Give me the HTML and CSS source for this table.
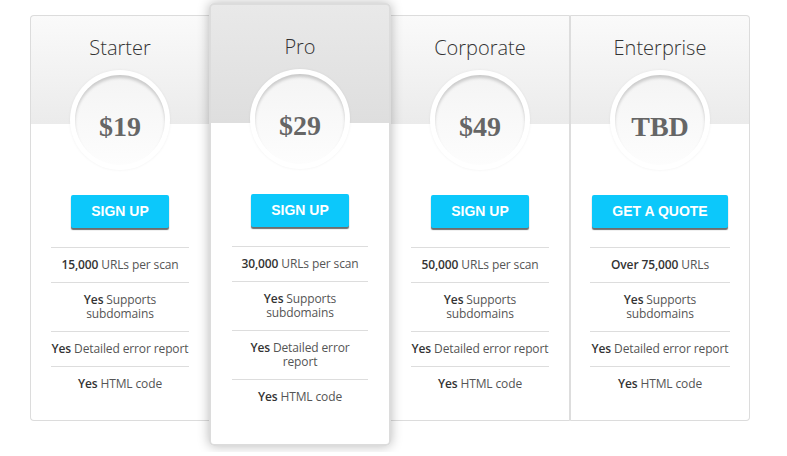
FILE: index.html
```html
<!DOCTYPE html>
<html>
<head>
<meta charset="utf-8">
<title>Pricing</title>
<link rel="stylesheet" href="styles.css">
</head>
<body>
<div class="plans">
  <div class="plan plan-first">
    <h2 class="plan-title">Starter</h2>
    <div class="price-ring"><div class="price">$19</div></div>
    <a class="btn">Sign up</a>
    <ul class="features">
      <li><b>15,000</b> URLs per scan</li>
      <li><b>Yes</b> Supports subdomains</li>
      <li><b>Yes</b> Detailed error report</li>
      <li><b>Yes</b> HTML code</li>
    </ul>
  </div>
  <div class="plan plan-featured">
    <h2 class="plan-title">Pro</h2>
    <div class="price-ring"><div class="price">$29</div></div>
    <a class="btn">Sign up</a>
    <ul class="features">
      <li><b>30,000</b> URLs per scan</li>
      <li><b>Yes</b> Supports subdomains</li>
      <li><b>Yes</b> Detailed error report</li>
      <li><b>Yes</b> HTML code</li>
    </ul>
  </div>
  <div class="plan">
    <h2 class="plan-title">Corporate</h2>
    <div class="price-ring"><div class="price">$49</div></div>
    <a class="btn">Sign up</a>
    <ul class="features">
      <li><b>50,000</b> URLs per scan</li>
      <li><b>Yes</b> Supports subdomains</li>
      <li><b>Yes</b> Detailed error report</li>
      <li><b>Yes</b> HTML code</li>
    </ul>
  </div>
  <div class="plan plan-last">
    <h2 class="plan-title">Enterprise</h2>
    <div class="price-ring"><div class="price">TBD</div></div>
    <a class="btn">Get a quote</a>
    <ul class="features">
      <li><b>Over 75,000</b> URLs</li>
      <li><b>Yes</b> Supports subdomains</li>
      <li><b>Yes</b> Detailed error report</li>
      <li><b>Yes</b> HTML code</li>
    </ul>
  </div>
</div>
</body>
</html>
```

FILE: styles.css
```css
* { box-sizing: border-box; }
html, body { margin: 0; background: #fff; }
body {
  padding: 3px 0 6px 30px;
  font-family: "Open Sans", "Liberation Sans", sans-serif;
}
.plans {
  display: flex;
  align-items: flex-start;
  width: 720px;
}
.plan {
  flex: 1 1 0;
  min-width: 0;
  height: 406px;
  margin-top: 12px;
  display: flex;
  flex-direction: column;
  align-items: center;
  border-top: 1px solid #dcdcdc;
  border-bottom: 1px solid #dcdcdc;
  background: linear-gradient(to bottom, #fafafa 0, #ebebeb 108px, #fff 108px, #fff 100%);
}
.plan-first {
  border-left: 1px solid #dcdcdc;
  border-radius: 4px 0 0 4px;
}
.plan-last {
  border-left: 2px solid #dddddd;
  border-right: 1px solid #dcdcdc;
  border-radius: 0 4px 4px 0;
}
.plan-featured {
  position: relative;
  z-index: 2;
  height: 443px;
  margin-top: 0;
  padding-top: 10px;
  border: 2px solid #dcdcdc;
  border-radius: 5px;
  background: linear-gradient(to bottom, #e9e9e9 0, #dedede 118px, #fff 118px, #fff 100%);
  box-shadow: 0 0 12px rgba(0, 0, 0, 0.28);
}
.plan-title {
  margin: 20px 0 10px;
  font-size: 20px;
  line-height: 24px;
  font-weight: 300;
  color: #333;
}
.price-ring {
  width: 100px;
  height: 100px;
  padding: 5px;
  border-radius: 50%;
  background: #fff;
  box-shadow: 0 0 3px rgba(0, 0, 0, 0.06);
}
.price {
  width: 90px;
  height: 90px;
  border-radius: 50%;
  background: linear-gradient(to bottom, #f4f4f4, #fdfdfd);
  box-shadow: inset 0 3px 3px rgba(0, 0, 0, 0.17);
  display: flex;
  align-items: center;
  justify-content: center;
  padding-top: 13px;
  font-family: "Liberation Serif", "Times New Roman", serif;
  font-weight: bold;
  font-size: 28px;
  color: #666;
}
.btn {
  display: inline-block;
  margin-top: 25px;
  padding: 0 20px;
  height: 33px;
  line-height: 33px;
  background: #0cc8fb;
  color: #fff;
  font-family: "Liberation Sans", Arial, sans-serif;
  font-weight: bold;
  font-size: 14px;
  text-transform: uppercase;
  border-radius: 2px;
  box-shadow: 0 2px 1px rgba(60, 60, 60, 0.75);
}
.features {
  list-style: none;
  margin: 19px 20px 0;
  padding: 0;
  align-self: stretch;
}
.plan-featured .features { margin: 19px 21px 0; }
.plan-last .features { margin: 19px 19px 0; }
.features li {
  border-top: 1px solid #dddddd;
  padding: 10px 0;
  text-align: center;
  font-size: 12px;
  line-height: 14px;
  letter-spacing: -0.12px;
  color: #555;
}
.features li b {
  font-weight: 600;
  color: #333;
}
```
